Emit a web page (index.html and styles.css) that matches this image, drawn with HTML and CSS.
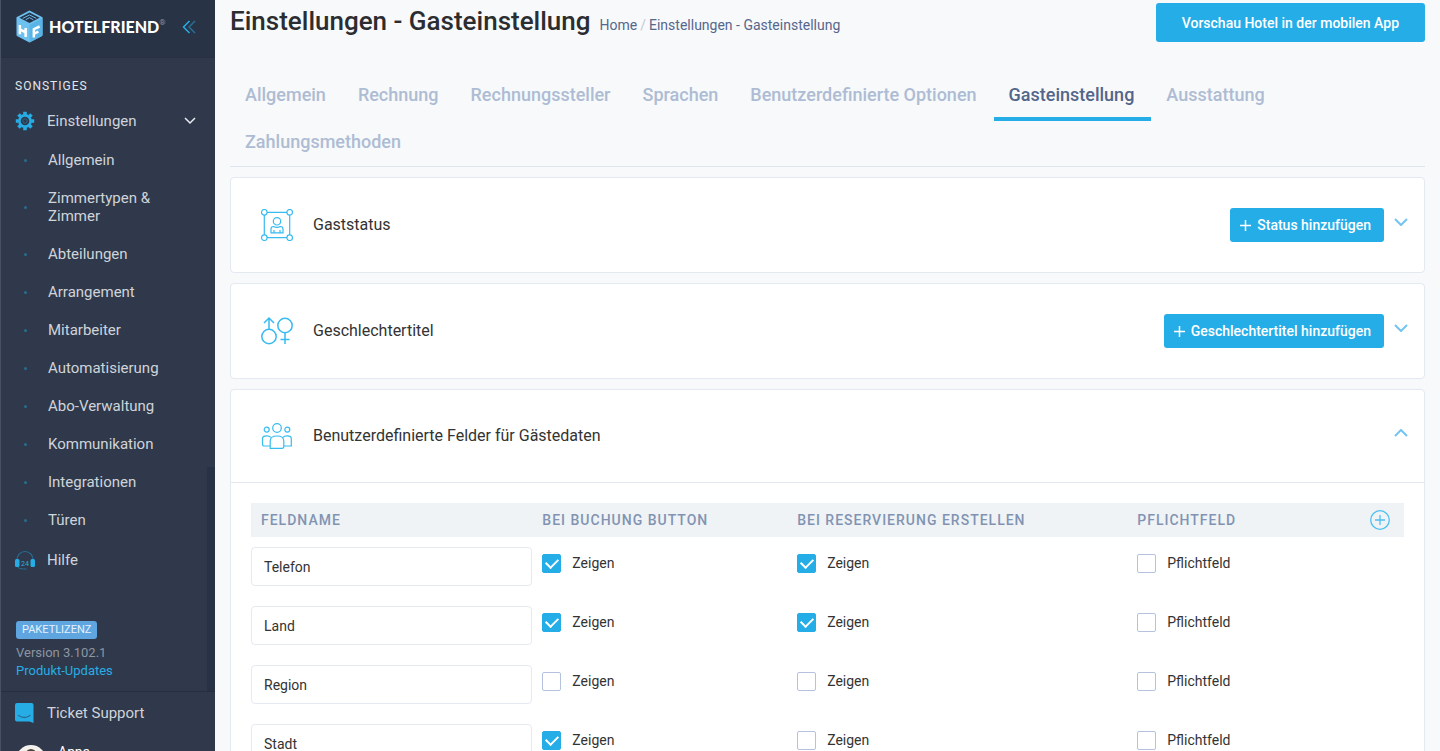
FILE: index.html
```html
<!DOCTYPE html>
<html lang="de">
<head>
<meta charset="utf-8">
<meta name="viewport" content="width=device-width, initial-scale=1">
<title>Einstellungen - Gasteinstellung</title>
<link rel="stylesheet" href="styles.css">
</head>
<body>
<div class="app">
  <aside class="sidebar">
    <div class="brand">
      <a class="brand-link" href="#">
        <svg class="brand-mark" viewBox="0 0 28 34" aria-hidden="true">
          <path d="M14 .500 27.500 7.500V25.500q0 1.200-1 1.700L14 33.500 1.500 27.200q-1-.500-1-1.700V7.500Z" fill="#6dc1ef"/>
          <path d="M14 2.600 24.500 8 14 13.400 3.500 8Z" fill="#263348"/>
          <path d="M7 8.600 14 5l7 3.600M10 10l4-2.200 4 2.200" fill="none" stroke="#6dc1ef" stroke-width="1"/>
          <path d="M14 15.500 27.500 8.500V25.500q0 1.200-1 1.700L14 33.500Z" fill="#58b4e6"/>
          <path d="M4 15.500v9.500M10 18.500v9.500M4 20l6 3" fill="none" stroke="#fff" stroke-width="2.600"/>
          <path d="M18.500 28.500v-8.700l6-2.800M18.500 24.600l4.700-2.200" fill="none" stroke="#fff" stroke-width="2.600"/>
        </svg>
        <span class="brand-name">HOTELFRIEND</span><span class="brand-reg">®</span>
      </a>
      <button class="collapse" type="button" aria-label="Menü einklappen">
        <svg width="14" height="14" viewBox="0 0 14 14" aria-hidden="true"><path d="M7.500 1 1.500 7l6 6" fill="none" stroke="#27ade6" stroke-width="1.500"/><path d="M13 1 7 7l6 6" fill="none" stroke="#286d95" stroke-width="1.500"/></svg>
      </button>
    </div>
    <nav class="menu">
      <h2 class="menu-heading">SONSTIGES</h2>
      <a class="menu-item" href="#">
        <svg class="menu-icon" viewBox="0 0 20 20" aria-hidden="true"><circle cx="10" cy="10" r="5.600" fill="none" stroke="#27ade6" stroke-width="2.600"/><path d="M10 .800v3M10 16.200v3M.800 10h3M16.200 10h3M3.500 3.500l2.100 2.100M14.400 14.400l2.100 2.100M16.500 3.500l-2.100 2.100M5.600 14.400l-2.100 2.100" stroke="#27ade6" stroke-width="3.600"/><circle cx="10" cy="10" r="2.200" fill="none" stroke="#25698e"/></svg>
        <span class="menu-label">Einstellungen</span>
        <svg width="12" height="8" viewBox="0 0 12 8" aria-hidden="true"><path d="m1 1 5 5 5-5" fill="none" stroke="#e8ebef" stroke-width="1.500"/></svg>
      </a>
      <ul class="submenu">
        <li><a href="#">Allgemein</a></li>
        <li><a href="#">Zimmertypen &amp; Zimmer</a></li>
        <li><a href="#">Abteilungen</a></li>
        <li><a href="#">Arrangement</a></li>
        <li><a href="#">Mitarbeiter</a></li>
        <li><a href="#">Automatisierung</a></li>
        <li><a href="#">Abo-Verwaltung</a></li>
        <li><a href="#">Kommunikation</a></li>
        <li><a href="#">Integrationen</a></li>
        <li><a href="#">Türen</a></li>
      </ul>
      <a class="menu-item" href="#">
        <svg class="menu-icon" viewBox="0 0 20 20" aria-hidden="true"><path d="M2 9.500a8 8 0 0 1 16 0" fill="none" stroke="#286d95" stroke-width="1.200"/><path d="M2.500 17q1.500 2 6 2h3" fill="none" stroke="#286d95"/><rect x="0" y="9" width="4.500" height="8" rx="1.500" fill="#27ade6"/><rect x="15.500" y="9" width="4.500" height="8" rx="1.500" fill="#27ade6"/><text x="10" y="15.500" class="icon-text">24</text></svg>
        <span class="menu-label">Hilfe</span>
      </a>
      <div class="licence">
        <span class="badge">PAKETLIZENZ</span>
        <span class="version">Version 3.102.1</span>
        <a class="updates" href="#">Produkt-Updates</a>
      </div>
      <span class="menu-scroll"></span>
    </nav>
    <div class="account">
      <a class="menu-item" href="#">
        <svg class="menu-icon" viewBox="0 0 20 20" aria-hidden="true"><path d="M2 0h14.500a2 2 0 0 1 2 2v18l-4-1.500H2a2 2 0 0 1-2-2V2a2 2 0 0 1 2-2Z" fill="#27ade6"/><path d="M3.500 12.500q5.800 4 11.500 0" fill="none" stroke="#286d95" stroke-width="1.300" stroke-linecap="round"/></svg>
        <span class="menu-label">Ticket Support</span>
      </a>
      <a class="user" href="#">
        <svg class="avatar" viewBox="0 0 30 30" aria-hidden="true"><circle cx="15" cy="15" r="15" fill="#f3f1ec"/><circle cx="15" cy="9.500" r="5.500" fill="#4a443f"/><path d="M5 26q1-10 10-10t10 10a15 15 0 0 1-20 0Z" fill="#6d655e"/></svg>
        <span>Anna</span>
      </a>
    </div>
  </aside>

  <main class="content">
    <header class="page-head">
      <h1>Einstellungen - Gasteinstellung</h1>
      <nav class="crumbs" aria-label="Brotkrumen"><a href="#">Home</a><span>/</span><a href="#">Einstellungen - Gasteinstellung</a></nav>
      <button class="btn btn-large" type="button">Vorschau Hotel in der mobilen App</button>
    </header>

    <nav class="tabs">
      <a href="#">Allgemein</a>
      <a href="#">Rechnung</a>
      <a href="#">Rechnungssteller</a>
      <a href="#">Sprachen</a>
      <a href="#">Benutzerdefinierte Optionen</a>
      <a href="#" class="active" aria-current="page">Gasteinstellung</a>
      <a href="#">Ausstattung</a>
      <a href="#">Zahlungsmethoden</a>
    </nav>

    <section class="card">
      <svg class="card-icon" viewBox="0 0 32 32" aria-hidden="true"><path d="M6 3.300h20M6 28.700h20M3.300 6v20M28.700 6v20"/><circle cx="3.300" cy="3.300" r="2.800"/><circle cx="28.700" cy="3.300" r="2.800"/><circle cx="3.300" cy="28.700" r="2.800"/><circle cx="28.700" cy="28.700" r="2.800"/><circle cx="16" cy="12.300" r="3.700"/><path d="M10 23.800V20q0-2.500 2.500-2.500 3.500 1.600 7 0Q22 17.500 22 20v3.800ZM13 21v2.800M19 21v2.800"/></svg>
      <h2>Gaststatus</h2>
      <button class="btn" type="button"><svg width="11" height="11" viewBox="0 0 11 11" aria-hidden="true"><path d="M5.500 0v11M0 5.500h11" stroke="#fff" stroke-width="1.500"/></svg>Status hinzufügen</button>
      <button class="toggle" type="button" aria-label="Aufklappen"><svg width="14" height="8" viewBox="0 0 14 8" aria-hidden="true"><path d="m1 1 6 6 6-6"/></svg></button>
    </section>

    <section class="card">
      <svg class="card-icon" viewBox="0 0 32 32" aria-hidden="true"><g stroke-width="1.500"><circle cx="8" cy="21.500" r="7.200"/><path d="M8 14V3.500M3 8l5-5 5 5"/><circle cx="24" cy="10.500" r="7.200"/><path d="M24 18v11M19.500 24.500h9"/></g></svg>
      <h2>Geschlechtertitel</h2>
      <button class="btn" type="button"><svg width="11" height="11" viewBox="0 0 11 11" aria-hidden="true"><path d="M5.500 0v11M0 5.500h11" stroke="#fff" stroke-width="1.500"/></svg>Geschlechtertitel hinzufügen</button>
      <button class="toggle" type="button" aria-label="Aufklappen"><svg width="14" height="8" viewBox="0 0 14 8" aria-hidden="true"><path d="m1 1 6 6 6-6"/></svg></button>
    </section>

    <section class="card card-open">
      <svg class="card-icon" viewBox="0 0 32 32" aria-hidden="true"><circle cx="16" cy="8" r="4.300"/><circle cx="5.700" cy="9.600" r="2.500"/><circle cx="26.300" cy="9.600" r="2.500"/><path d="M9.200 28.400V21q0-5 6.800-5t6.800 5v5.500q0 1.900-2 1.900ZM9 26H3.200Q1.500 26 1.500 24.200V18.500q0-2.700 4.300-2.700 2.700 0 4 1.600M23 26h7.300V18.500q0-2.700-4.300-2.700-2.700 0-4 1.600"/></svg>
      <h2>Benutzerdefinierte Felder für Gästedaten</h2>
      <button class="toggle" type="button" aria-label="Zuklappen"><svg width="14" height="8" viewBox="0 0 14 8" aria-hidden="true"><path d="m1 7 6-6 6 6"/></svg></button>
    </section>
    <div class="card-body">
      <table class="fields">
        <colgroup><col class="c-name"><col class="c-book"><col class="c-reserve"><col><col class="c-add"></colgroup>
        <thead>
          <tr>
            <th>FELDNAME</th><th>BEI BUCHUNG BUTTON</th><th>BEI RESERVIERUNG ERSTELLEN</th><th>PFLICHTFELD</th>
            <th><button class="add" type="button" aria-label="Feld hinzufügen"><svg width="20" height="20" viewBox="0 0 20 20" aria-hidden="true"><circle cx="10" cy="10" r="9.300"/><path d="M10 5v10M5 10h10"/></svg></button></th>
          </tr>
        </thead>
        <tbody>
          <tr>
            <td><input class="text" type="text" value="Telefon" aria-label="Feldname"></td>
            <td><label class="check"><input type="checkbox" checked>Zeigen</label></td>
            <td><label class="check"><input type="checkbox" checked>Zeigen</label></td>
            <td><label class="check"><input type="checkbox">Pflichtfeld</label></td><td></td>
          </tr>
          <tr>
            <td><input class="text" type="text" value="Land" aria-label="Feldname"></td>
            <td><label class="check"><input type="checkbox" checked>Zeigen</label></td>
            <td><label class="check"><input type="checkbox" checked>Zeigen</label></td>
            <td><label class="check"><input type="checkbox">Pflichtfeld</label></td><td></td>
          </tr>
          <tr>
            <td><input class="text" type="text" value="Region" aria-label="Feldname"></td>
            <td><label class="check"><input type="checkbox">Zeigen</label></td>
            <td><label class="check"><input type="checkbox">Zeigen</label></td>
            <td><label class="check"><input type="checkbox">Pflichtfeld</label></td><td></td>
          </tr>
          <tr>
            <td><input class="text" type="text" value="Stadt" aria-label="Feldname"></td>
            <td><label class="check"><input type="checkbox" checked>Zeigen</label></td>
            <td><label class="check"><input type="checkbox">Zeigen</label></td>
            <td><label class="check"><input type="checkbox">Pflichtfeld</label></td><td></td>
          </tr>
        </tbody>
      </table>
    </div>
  </main>
</div>
</body>
</html>
```
FILE: styles.css
```css
* { box-sizing: border-box; }

body {
  margin: 0;
  background: #f7f9fb;
  color: #333;
  font: 14px/20px Roboto, "Liberation Sans", sans-serif;
}

a { color: inherit; text-decoration: none; }
button { padding: 0; border: 0; background: none; font: inherit; cursor: pointer; }
svg { display: block; flex: none; }
h1, h2 { margin: 0; }

.app { display: flex; height: 100vh; overflow: hidden; }

/* Sidebar */
.sidebar {
  display: flex;
  flex: 0 0 215px;
  flex-direction: column;
  overflow: hidden;
  border-left: 1px solid #475365;
  background: #2f394b;
  color: #d0d4da;
}

.brand {
  display: flex;
  flex: none;
  align-items: center;
  justify-content: space-between;
  height: 58px;
  padding: 0 19px 4px 15px;
  border-bottom: 1px solid #273143;
  background: #293346;
}
.brand-link { display: flex; align-items: center; }
.brand-mark { width: 27px; height: 33px; margin-right: 6px; }
.brand-name { color: #fff; font: 900 16px/20px Lato, sans-serif; }
.brand-reg { align-self: flex-start; color: #8c94a0; font-size: 8px; line-height: 26px; }

.menu { position: relative; flex: none; padding-top: 18px; border-bottom: 1px solid #252f40; }
.menu-heading {
  padding: 0 14px;
  margin-bottom: 5px;
  color: #e3e6ea;
  font-size: 12px;
  font-weight: 400;
  line-height: 20px;
  letter-spacing: 1px;
}
.menu-item {
  display: flex;
  align-items: center;
  height: 40px;
  padding: 0 19px 0 14px;
  font-size: 15px;
}
.menu-icon { width: 20px; height: 20px; margin-right: 12px; }
.menu-label { flex: 1; }
.icon-text { fill: #27ade6; font-size: 7px; text-anchor: middle; }

.submenu { padding: 0 0 1px; margin: 0; list-style: none; }
.submenu a {
  display: flex;
  align-items: center;
  padding: 10px 40px 10px 23px;
  font-size: 15px;
  line-height: 18px;
}
.submenu a::before {
  flex: none;
  width: 3px;
  height: 3px;
  margin-right: 21px;
  border-radius: 50%;
  background: #286d8c;
  content: "";
}

.licence {
  display: flex;
  flex-direction: column;
  align-items: flex-start;
  padding: 41px 15px 11px;
  font-size: 13px;
  line-height: 18px;
}
.badge {
  padding: 0 6px;
  margin-bottom: 5px;
  border-radius: 3px;
  background: #5fa6e0;
  color: #e6f1fb;
  font-size: 11px;
}
.version { color: #8d95a1; }
.updates { color: #27ade6; }
.menu-scroll {
  position: absolute;
  right: 0;
  bottom: 0;
  width: 8px;
  height: 224px;
  background: #283246;
}

.account { padding-top: 1px; }
.user { display: flex; gap: 12px; align-items: flex-start; padding: 9px 15px; color: #fff; }
.avatar { width: 30px; height: 30px; margin-top: 3px; }

/* Content */
.content { flex: 1; min-width: 0; padding: 3px 15px 0; overflow: hidden; }

.page-head { display: flex; align-items: baseline; min-height: 71px; }
h1 { color: #2b2d31; font-size: 26px; font-weight: 500; line-height: 36px; }
.crumbs { display: flex; gap: 3px; margin-left: 9px; color: #56678c; }
.crumbs span { color: #c3cad6; }

.btn {
  display: flex;
  gap: 6px;
  align-items: center;
  height: 34px;
  padding: 0 13px 0 10px;
  border-radius: 3px;
  background: #25ade8;
  color: #fff;
  font-weight: 500;
}
.btn-large { align-self: flex-start; height: 39px; padding: 0 26px; margin-left: auto; }

.tabs {
  display: flex;
  flex-wrap: wrap;
  align-items: flex-start;
  margin-bottom: 10px;
  border-bottom: 1px solid #dfe5ef;
  color: #aebcd3;
  font-size: 18px;
  font-weight: 500;
  line-height: 22px;
}
.tabs a { padding: 10px 17px 13px 15px; }
.tabs .active { padding-bottom: 11px; border-bottom: 4px solid #25ade8; color: #53658a; }

.card {
  display: flex;
  align-items: center;
  padding: 30px 15px 30px 30px;
  margin-bottom: 10px;
  border: 1px solid #e3e8f1;
  border-radius: 4px;
  background: #fff;
}
.card-icon {
  width: 32px;
  height: 32px;
  margin-right: 20px;
  fill: none;
  stroke: #38bbf0;
  stroke-width: 1.2;
}
.card h2 { flex: 1; color: #333; font-size: 16px; font-weight: 400; }
.toggle { padding: 2px 1px 8px; margin-left: 9px; }
.toggle path { fill: none; stroke: #74c3f0; stroke-width: 2; }
.card-open { margin-bottom: 0; border-radius: 4px 4px 0 0; }
.card-body { padding: 20px; border: 1px solid #e3e8f1; border-top: 0; background: #fff; }

/* Field table */
.fields { width: 100%; table-layout: fixed; border-collapse: collapse; }
.c-name { width: 24.4%; }
.c-book { width: 22.1%; }
.c-reserve { width: 29.5%; }
.c-add { width: 50px; }
.fields th {
  height: 34px;
  padding: 0 10px;
  background: #eff3f6;
  color: #8293b2;
  font-weight: 500;
  text-align: left;
  letter-spacing: 1px;
  white-space: nowrap;
}
.fields td { padding: 10px 0; vertical-align: top; }
.add { display: block; margin-left: auto; margin-right: 4px; }
.add svg { fill: none; stroke: #4fc0ee; stroke-width: 1.3; }

.text {
  display: block;
  width: 100%;
  height: 39px;
  padding: 0 12px;
  border: 1px solid #e4e9f2;
  border-radius: 4px;
  background: #fff;
  color: #333;
  font: inherit;
}
.check { display: flex; gap: 11px; align-items: flex-end; padding: 6px 0 0 10px; }
.check input {
  display: grid;
  place-items: center;
  width: 19px;
  height: 19px;
  margin: 0;
  border: 1px solid #b4c2dd;
  border-radius: 2px;
  background: #fff;
  appearance: none;
}
.check input:checked { border-color: #25ade8; background: #25ade8; }
.check input:checked::after {
  width: 10px;
  height: 6px;
  margin-bottom: 3px;
  border: solid #fff;
  border-width: 0 0 2px 2px;
  content: "";
  rotate: -45deg;
}
```
